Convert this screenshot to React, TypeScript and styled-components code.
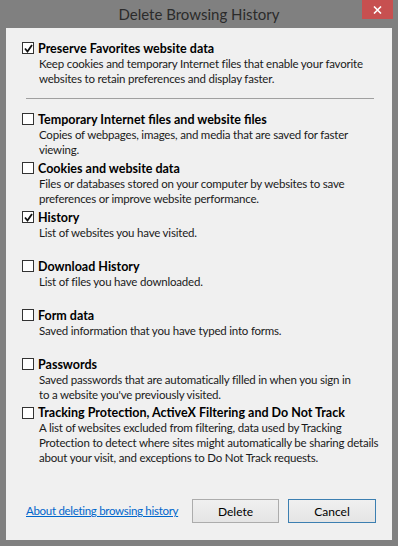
import React from 'react';
import styled, { createGlobalStyle } from 'styled-components';

const GlobalStyle = createGlobalStyle`
  html, body {
    margin: 0;
    padding: 0;
    background: #808080;
  }
`;

const Frame = styled.div`
  width: 398px;
  height: 546px;
  box-sizing: border-box;
  background: #808080;
  display: flex;
  flex-direction: column;
  padding: 0 6px 6px 6px;
  font-family: Lato, 'Open Sans', sans-serif;
`;

const TitleBar = styled.div`
  position: relative;
  height: 28px;
  display: flex;
  align-items: center;
  justify-content: center;
  color: #2b2b2b;
  font-size: 15px;
`;

const CloseButton = styled.div`
  position: absolute;
  top: 0;
  right: -1px;
  width: 31px;
  height: 19px;
  background: #c75050;
  display: flex;
  align-items: center;
  justify-content: center;
`;

const Client = styled.div`
  flex: 1;
  background: #f0f0f0;
  display: flex;
  flex-direction: column;
  padding: 12px 16px 0 16px;
  box-sizing: border-box;
`;

const Item = styled.div<{ $h?: number }>`
  height: ${(p) => (p.$h ? `${p.$h}px` : 'auto')};
  display: flex;
  flex-direction: column;
`;

const LabelRow = styled.div`
  display: flex;
  align-items: center;
  height: 16px;
  gap: 4px;
`;

const Box = styled.div`
  width: 10px;
  height: 10px;
  border: 1px solid #333;
  background: #fff;
  display: flex;
  align-items: center;
  justify-content: center;
  flex-shrink: 0;
`;

const Label = styled.span`
  font-weight: 700;
  font-size: 12.5px;
  color: #000;
  white-space: nowrap;
`;

const Desc = styled.div`
  padding-left: 17px;
  font-size: 11.5px;
  letter-spacing: -0.2px;
  line-height: 15px;
  color: #1a1a1a;
  white-space: nowrap;
`;

const Separator = styled.div`
  height: 1px;
  background: #a0a0a0;
  margin: 12px 2px 12px 4px;
`;

const Footer = styled.div`
  margin-top: auto;
  height: 41px;
  display: flex;
  align-items: flex-start;
  padding-left: 4px;
`;

const Link = styled.a`
  font-size: 11.5px;
  letter-spacing: -0.3px;
  color: #0066cc;
  text-decoration: underline;
  white-space: nowrap;
  margin-top: 5px;
  margin-right: auto;
`;

const Button = styled.button<{ $focus?: boolean }>`
  width: ${(p) => (p.$focus ? 88 : 87)}px;
  height: 24px;
  margin-left: 9px;
  box-sizing: border-box;
  border: 1px solid ${(p) => (p.$focus ? '#3c7fb1' : '#acacac')};
  background: linear-gradient(#f0f0f0, #e5e5e5);
  font-family: inherit;
  font-size: 12px;
  color: #000;
  padding: 0;
`;

const Check = () => (
  <svg width="9" height="9" viewBox="0 0 9 9">
    <path d="M1 4.5 L3.5 7.5 L8 1" fill="none" stroke="#111" strokeWidth="1.8" />
  </svg>
);

type Entry = { label: string; lines: string[]; checked: boolean };

const preserve: Entry = {
  label: 'Preserve Favorites website data',
  lines: [
    'Keep cookies and temporary Internet files that enable your favorite',
    'websites to retain preferences and display faster.',
  ],
  checked: true,
};

const items: Entry[] = [
  { label: 'Temporary Internet files and website files', lines: ['Copies of webpages, images, and media that are saved for faster', 'viewing.'], checked: false },
  { label: 'Cookies and website data', lines: ['Files or databases stored on your computer by websites to save', 'preferences or improve website performance.'], checked: false },
  { label: 'History', lines: ['List of websites you have visited.'], checked: true },
  { label: 'Download History', lines: ['List of files you have downloaded.'], checked: false },
  { label: 'Form data', lines: ['Saved information that you have typed into forms.'], checked: false },
  { label: 'Passwords', lines: ['Saved passwords that are automatically filled in when you sign in', "to a website you've previously visited."], checked: false },
  {
    label: 'Tracking Protection, ActiveX Filtering and Do Not Track',
    lines: [
      'A list of websites excluded from filtering, data used by Tracking',
      'Protection to detect where sites might automatically be sharing details',
      'about your visit, and exceptions to Do Not Track requests.',
    ],
    checked: false,
  },
];

const Option = ({ entry, h }: { entry: Entry; h?: number }) => (
  <Item $h={h}>
    <LabelRow>
      <Box>{entry.checked && <Check />}</Box>
      <Label>{entry.label}</Label>
    </LabelRow>
    <Desc>
      {entry.lines.map((l, i) => (
        <div key={i}>{l}</div>
      ))}
    </Desc>
  </Item>
);

export default function App() {
  return (
    <>
      <GlobalStyle />
      <Frame>
        <TitleBar>
          Delete Browsing History
          <CloseButton>
            <svg width="9" height="8" viewBox="0 0 9 8">
              <path d="M1 0.5 L8 7.5 M8 0.5 L1 7.5" stroke="#fff" strokeWidth="1.6" />
            </svg>
          </CloseButton>
        </TitleBar>
        <Client>
          <Option entry={preserve} />
          <Separator />
          {items.map((it) => (
            <Option key={it.label} entry={it} h={49} />
          ))}
          <Footer>
            <Link href="#">About deleting browsing history</Link>
            <Button>Delete</Button>
            <Button $focus>Cancel</Button>
          </Footer>
        </Client>
      </Frame>
    </>
  );
}
